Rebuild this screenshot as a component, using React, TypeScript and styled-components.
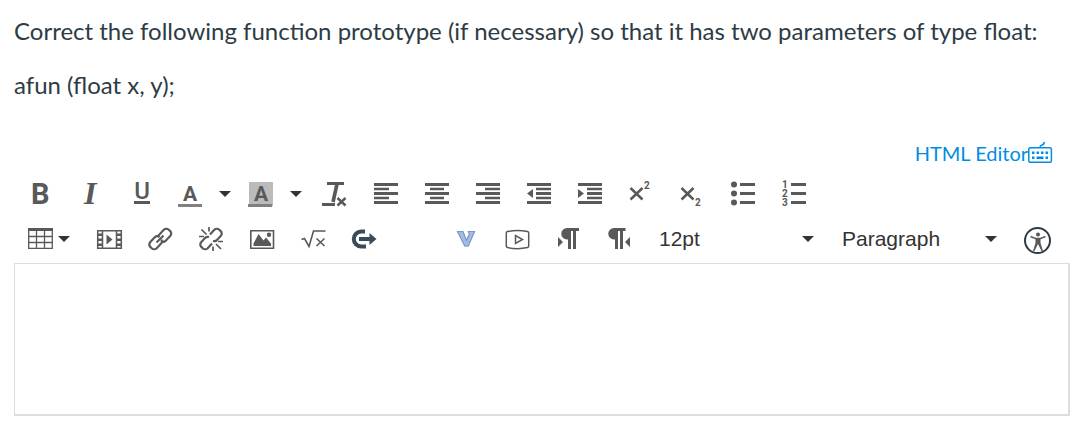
import React from "react";
import styled, { createGlobalStyle } from "styled-components";

const GlobalStyle = createGlobalStyle`
  *, *::before, *::after { box-sizing: border-box; }
  body { margin: 0; background: #fff; color: #2d3b45; font-family: Lato, "Open Sans", sans-serif; }
`;

const Page = styled.main`
  padding: 13px 14px 10px;
`;

const Prompt = styled.p`
  margin: 0 0 18px;
  font-size: 24px;
  line-height: 36px;
`;

const ViewBar = styled.div`
  display: flex;
  justify-content: flex-end;
  padding: 17px 18px 0 0;
`;

const ViewLink = styled.a`
  display: flex;
  align-items: center;
  height: 30px;
  color: #008ee2;
  font-size: 20px;
  line-height: 30px;
  text-decoration: none;
`;

const Toolbar = styled.div`
  padding: 4px 1px 1px;
`;

const ToolRow = styled.div`
  display: flex;
  height: 45px;
`;

const ToolButton = styled.button<{ $kind?: "split" | "caret" | "menu" }>`
  display: flex;
  flex: none;
  gap: 6px;
  width: ${(p) => (p.$kind === "split" ? 44 : p.$kind === "caret" ? 27 : p.$kind === "menu" ? 69 : 51)}px;
  padding: 10px 0 0 ${(p) => (p.$kind === "split" ? 10 : p.$kind === "caret" ? 7 : 13)}px;
  border: 0;
  background: none;
  color: #595959;
  cursor: pointer;
`;

const Glyph = styled.svg`
  display: block;
  flex: none;
  overflow: visible;
`;

const SelectBox = styled.label`
  position: relative;
  flex: 0 0 183px;
  height: 45px;
`;

const Select = styled.select`
  appearance: none;
  width: 100%;
  height: 44px;
  padding: 0 36px 0 14px;
  border: 0;
  background: none;
  color: #333;
  font: 21px/44px "Liberation Sans", Arial, sans-serif;
`;

const SelectCaret = styled.span`
  position: absolute;
  top: 10px;
  right: 14px;
  pointer-events: none;
`;

const Editor = styled.textarea`
  display: block;
  width: 100%;
  height: 153px;
  padding: 12px;
  border: 1px solid #ddd;
  border-right-width: 2px;
  border-bottom-width: 2px;
  outline: 0;
  resize: none;
  color: inherit;
  font: 16px/24px Lato, sans-serif;
`;

const Icon = ({ children, size = 24 }: { children: React.ReactNode; size?: number }) => (
  <Glyph width={size} height={size} viewBox={`0 0 ${size} ${size}`} fill="currentColor" aria-hidden="true">
    {children}
  </Glyph>
);

const Caret = () => (
  <Glyph width={12} height={24} viewBox="0 0 12 24" fill="#333" aria-hidden="true">
    <path d="M0 9h12l-6 6z" />
  </Glyph>
);

const bars = (short: number, inner: number) => (
  <path d={`M0 1h24v3H0z M${short} 5.7h${inner}v2.6h-${inner}z M0 10h24v3H0z M${short} 14.7h${inner}v2.6h-${inner}z M0 19h24v3H0z`} />
);

const indentBars = <path d="M0 1h24v3H0z M9 5.7h15v2.6H9z M9 10h15v3H9z M9 14.7h15v2.6H9z M0 19h24v3H0z" />;

const sans = "Roboto, sans-serif";

type Tool = { name: string; art: React.ReactNode; kind?: "split" | "menu" };

const formatTools: Tool[] = [
  { name: "Bold", art: <text x="3" y="22" fontFamily={sans} fontSize="29" fontWeight="700">B</text> },
  { name: "Italic", art: <text x="5" y="22" fontFamily="Liberation Serif, serif" fontSize="32" fontWeight="700" fontStyle="italic">I</text> },
  {
    name: "Underline",
    art: (
      <>
        <text x="12" y="17" textAnchor="middle" fontFamily={sans} fontSize="24" fontWeight="500">U</text>
        <path d="M4 19h16v3H4z" />
      </>
    ),
  },
  {
    name: "Text color",
    kind: "split",
    art: (
      <>
        <text x="12" y="19" textAnchor="middle" fontFamily={sans} fontSize="21" fontWeight="700">A</text>
        <path d="M0 22h24v3H0z" fill="#808080" />
      </>
    ),
  },
  {
    name: "Background color",
    kind: "split",
    art: (
      <>
        <path d="M0 0h24v24H0z" fill="#bbb" />
        <text x="12" y="19" textAnchor="middle" fontFamily={sans} fontSize="21" fontWeight="700">A</text>
        <path d="M-1 22h24v3H-1z" fill="#808080" />
      </>
    ),
  },
  {
    name: "Clear formatting",
    art: (
      <>
        <path d="M4 0h17v3H4z M-1 21h13v3H-1z" />
        <path d="M14 2l-4 18" stroke="currentColor" strokeWidth="3.600" />
        <path d="M14.500 16l8 7.500m0-7.500l-8 7.500" stroke="currentColor" strokeWidth="2.400" />
      </>
    ),
  },
  { name: "Align left", art: bars(0, 15) },
  { name: "Align center", art: bars(5, 14) },
  { name: "Align right", art: bars(9, 15) },
  { name: "Decrease indent", art: <>{indentBars}<path d="M6 7v9l-6-4.500z" /></> },
  { name: "Increase indent", art: <>{indentBars}<path d="M0 7v9l6-4.500z" /></> },
  {
    name: "Superscript",
    art: (
      <>
        <path d="M1.500 6l12 11.500m0-11.500l-12 11.500" stroke="currentColor" strokeWidth="2.500" />
        <text x="15" y="7" fontFamily={sans} fontSize="10" fontWeight="700">2</text>
      </>
    ),
  },
  {
    name: "Subscript",
    art: (
      <>
        <path d="M1.500 6l12 11.500m0-11.500l-12 11.500" stroke="currentColor" strokeWidth="2.500" />
        <text x="15" y="24" fontFamily={sans} fontSize="10" fontWeight="700">2</text>
      </>
    ),
  },
  {
    name: "Bullet list",
    art: (
      <>
        <circle cx="3" cy="2.500" r="3" />
        <circle cx="3" cy="11.500" r="3" />
        <circle cx="3" cy="20.500" r="3" />
        <path d="M9 1h15v3H9z M9 10h15v3H9z M9 19h15v3H9z" />
      </>
    ),
  },
  {
    name: "Numbered list",
    art: (
      <>
        <g fontFamily={sans} fontSize="10" fontWeight="700">
          <text x="0" y="6">1</text>
          <text x="0" y="15">2</text>
          <text x="0" y="24">3</text>
        </g>
        <path d="M9 1h15v3H9z M9 10h15v3H9z M9 19h15v3H9z" />
      </>
    ),
  },
];

const insertTools: Tool[] = [
  {
    name: "Table",
    kind: "menu",
    art: (
      <>
        <path d="M0 1h25v3H0z" />
        <path d="M.7 3v18.300h23.600V3M8.500 3v18M16.500 3v18M1 9.500h23M1 15.500h23" fill="none" stroke="currentColor" strokeWidth="1.300" />
      </>
    ),
  },
  {
    name: "Insert media",
    art: (
      <>
        <path d="M.7 3.700h23.600v17.600H.7z M5.500 4v17M19.500 4v17" fill="none" stroke="currentColor" strokeWidth="1.500" />
        <path d="M1 6.500h4v2.500H1z M1 11.500h4v2.500H1z M1 16.500h4v2.500H1z M20 6.500h4v2.500h-4z M20 11.500h4v2.500h-4z M20 16.500h4v2.500h-4z" />
        <path d="M9.500 7.500v10l6-5z" />
      </>
    ),
  },
  {
    name: "Insert link",
    art: (
      <g fill="none" stroke="currentColor" strokeWidth="2.200">
        <path d="M11 10.500L10.500 8.500l5.300-5.700a3.600 3.600 0 0 1 5 0l1.400 1.300a3.600 3.600 0 0 1 0 5l-4.700 4.800a3.600 3.600 0 0 1-3.500.8" />
        <path d="M13.500 12.500L14 15.500l-5.300 5.700a3.600 3.600 0 0 1-5 0l-1.400-1.300a3.600 3.600 0 0 1 0-5L7 10.100a3.600 3.600 0 0 1 3.500-.8" />
        <path d="M8.500 15.500l7-7" />
      </g>
    ),
  },
  {
    name: "Remove link",
    art: (
      <g fill="none" stroke="currentColor" strokeWidth="2.200">
        <path d="M11 7.500l4.300-4.700a3.600 3.600 0 0 1 5 0l1.400 1.300a3.600 3.600 0 0 1 0 5L17.500 13.500q-1.500 1-3.500.5M13 16.500l-4.300 4.700a3.600 3.600 0 0 1-5 0l-1.400-1.300a3.600 3.600 0 0 1 0-5L6.500 10.500q1.500-1 3.500-.5" />
        <path d="M10 0v4.500M2.500 2.500l5 5M0 9.500h5M14 19.500V24M17 17l5 5M19 14.500h5" strokeWidth="1.700" />
      </g>
    ),
  },
  {
    name: "Insert image",
    art: (
      <>
        <path d="M.8 3.800h22.700v17.400H.8z" fill="none" stroke="currentColor" strokeWidth="1.600" />
        <path d="M3.500 19v-2.500L8.500 7l5 6.500 2.500-3 5 6V19z" />
        <circle cx="19" cy="7.800" r="2.200" />
      </>
    ),
  },
  {
    name: "Insert equation",
    art: (
      <g fill="none" stroke="currentColor" strokeWidth="1.600">
        <path d="M.5 12.500l3-1 4.500 8L12.500 4H24.500" />
        <path d="M15.500 11.500l8 7.500m0-7.500l-8 7.500" />
      </g>
    ),
  },
  {
    name: "Embed external tool",
    art: (
      <g fill="none" stroke="#394b58">
        <path d="M13 4.600H9.200a7.400 7.400 0 0 0 0 14.800H14" strokeWidth="4" />
        <path d="M7 12h12" strokeWidth="4" />
        <path d="M17.500 6v12L24.500 12z" fill="#394b58" stroke="none" />
      </g>
    ),
  },
  { name: "More tools", art: null },
  {
    name: "Insert video embed",
    art: (
      <>
        <path d="M3 4h6l3.200 8.500L15.500 7 14.500 4H21l-6.500 15.500h-4z" fill="#a3bde2" />
        <path d="M3.500 4.500H9l3.500 9 2.800-6.500-1-2.500h6.200L14.300 19h-3.500z" fill="none" stroke="#7c98c4" strokeWidth="1.200" />
      </>
    ),
  },
  {
    name: "Record video",
    art: (
      <g fill="none" stroke="currentColor" strokeWidth="1.500">
        <path d="M2.500 4.500Q12.500 2.500 22.500 4.500Q23.700 4.800 23.700 6v13q0 1.400-1.200 1.600Q12.500 22.800 2.500 20.600Q1.300 20.400 1.300 19V6Q1.300 4.800 2.500 4.500z" />
        <path d="M10.500 8.500v8l7-4z" />
      </g>
    ),
  },
  {
    name: "Left to right",
    art: <path d="M11 1h12v3h-3v18h-3V4h-2v18h-3v-9.500h-1a5.700 5.700 0 0 1 0-11.500z M2 10v10l5-5z" />,
  },
  {
    name: "Right to left",
    art: <path d="M7 1h11.500v3H16v18h-3V4h-2v18H8v-9.500H7A5.700 5.700 0 0 1 7 1z M23 10v10l-5-5z" />,
  },
];

const renderTool = ({ name, art, kind }: Tool) => (
  <React.Fragment key={name}>
    <ToolButton type="button" aria-label={name} $kind={kind}>
      <Icon>{art}</Icon>
      {kind === "menu" && <Caret />}
    </ToolButton>
    {kind === "split" && (
      <ToolButton type="button" aria-label={`${name} options`} $kind="caret">
        <Caret />
      </ToolButton>
    )}
  </React.Fragment>
);

const Dropdown = ({ label, options }: { label: string; options: string[] }) => (
  <SelectBox>
    <Select aria-label={label} defaultValue={options[0]}>
      {options.map((o) => (
        <option key={o}>{o}</option>
      ))}
    </Select>
    <SelectCaret>
      <Caret />
    </SelectCaret>
  </SelectBox>
);

export default function App() {
  return (
    <Page>
      <GlobalStyle />
      <Prompt>Correct the following function prototype (if necessary) so that it has two parameters of type float:</Prompt>
      <Prompt>afun (float x, y);</Prompt>
      <ViewBar>
        <ViewLink href="#html">
          HTML Editor
          <Icon>
            <rect x=".8" y="6.800" width="22.600" height="14.500" rx="1.500" fill="none" stroke="currentColor" strokeWidth="1.500" />
            <path d="M12 6.500q0-2 2-2.500t2.500-3" fill="none" stroke="currentColor" strokeWidth="1.500" />
            <path d="M4 10.500h2.500V13H4z M8.500 10.500H11V13H8.500z M13 10.500h2.500V13H13z M17.500 10.500H20V13h-2.500z M4 15.500h2.500V18H4z M8.500 15.500h7V18h-7z M17.500 15.500H20V18h-2.500z" />
          </Icon>
        </ViewLink>
      </ViewBar>
      <Toolbar role="toolbar" aria-label="Formatting">
        <ToolRow>{formatTools.map(renderTool)}</ToolRow>
        <ToolRow>
          {insertTools.map(renderTool)}
          <Dropdown label="Font size" options={["12pt", "14pt", "18pt"]} />
          <Dropdown label="Block format" options={["Paragraph", "Heading 2", "Preformatted"]} />
          <ToolButton type="button" aria-label="Check accessibility">
            <Icon size={27}>
              <g stroke="#2d3b45" fill="none">
                <circle cx="13.500" cy="13.500" r="12.500" strokeWidth="2" />
                <circle cx="14" cy="7.500" r="2" fill="#595959" stroke="none" />
                <path d="M6.500 9.500l5 2h5l5-2" stroke="#595959" strokeWidth="1.500" />
                <path d="M11.500 11h5v5l2.500 8h-1.500l-3.500-7-3.500 7H9l2.500-8z" fill="#595959" stroke="none" />
              </g>
            </Icon>
          </ToolButton>
        </ToolRow>
      </Toolbar>
      <Editor aria-label="Answer" />
    </Page>
  );
}
